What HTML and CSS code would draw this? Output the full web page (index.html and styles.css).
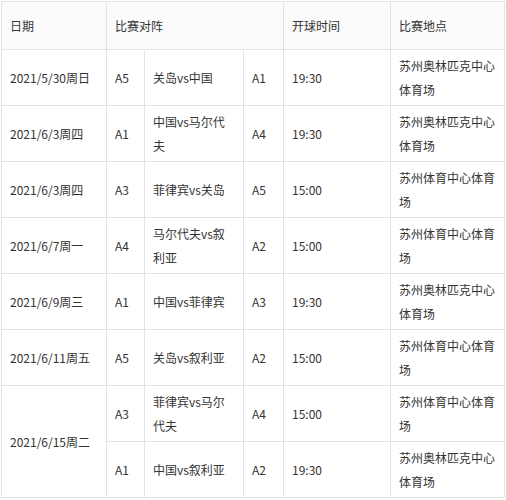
FILE: index.html
```html
<!DOCTYPE html>
<html lang="zh-CN">
<head>
<meta charset="utf-8">
<link rel="stylesheet" href="styles.css">
</head>
<body>
<table class="schedule">
  <colgroup>
    <col class="c-date">
    <col class="c-team1">
    <col class="c-match">
    <col class="c-team2">
    <col class="c-time">
    <col class="c-venue">
  </colgroup>
  <thead>
    <tr class="head">
      <th>日期</th>
      <th colspan="3">比赛对阵</th>
      <th>开球时间</th>
      <th>比赛地点</th>
    </tr>
  </thead>
  <tbody>
    <tr>
      <td>2021/5/30周日</td><td>A5</td><td>关岛vs中国</td><td>A1</td><td>19:30</td><td>苏州奥林匹克中心体育场</td>
    </tr>
    <tr>
      <td>2021/6/3周四</td><td>A1</td><td>中国vs马尔代夫</td><td>A4</td><td>19:30</td><td>苏州奥林匹克中心体育场</td>
    </tr>
    <tr>
      <td>2021/6/3周四</td><td>A3</td><td>菲律宾vs关岛</td><td>A5</td><td>15:00</td><td>苏州体育中心体育场</td>
    </tr>
    <tr>
      <td>2021/6/7周一</td><td>A4</td><td>马尔代夫vs叙利亚</td><td>A2</td><td>15:00</td><td>苏州体育中心体育场</td>
    </tr>
    <tr>
      <td>2021/6/9周三</td><td>A1</td><td>中国vs菲律宾</td><td>A3</td><td>19:30</td><td>苏州奥林匹克中心体育场</td>
    </tr>
    <tr>
      <td>2021/6/11周五</td><td>A5</td><td>关岛vs叙利亚</td><td>A2</td><td>15:00</td><td>苏州体育中心体育场</td>
    </tr>
    <tr>
      <td rowspan="2">2021/6/15周二</td><td>A3</td><td>菲律宾vs马尔代夫</td><td>A4</td><td>15:00</td><td>苏州体育中心体育场</td>
    </tr>
    <tr>
      <td>A1</td><td>中国vs叙利亚</td><td>A2</td><td>19:30</td><td>苏州奥林匹克中心体育场</td>
    </tr>
  </tbody>
</table>
</body>
</html>
```
FILE: styles.css
```css
html, body {
  margin: 0;
  padding: 0;
  background: #ffffff;
}

body {
  font-family: "Noto Sans CJK SC", "Noto Sans", sans-serif;
  font-size: 12px;
  color: #333333;
}

.schedule {
  border-collapse: collapse;
  table-layout: fixed;
  width: 503px;
  margin: 1px 0 0 1px;
}

.c-date { width: 105px; }
.c-team1 { width: 38px; }
.c-match { width: 99px; }
.c-team2 { width: 40px; }
.c-time { width: 107px; }
.c-venue { width: 114px; }

.schedule th,
.schedule td {
  border: 1px solid #e3e3e3;
  padding: 3px 8px;
  line-height: 24px;
  text-align: left;
  vertical-align: middle;
  font-weight: normal;
}

.schedule .head th {
  height: 41px;
  background: #fbfbfb;
}

.schedule tbody tr {
  height: 56px;
}
```
